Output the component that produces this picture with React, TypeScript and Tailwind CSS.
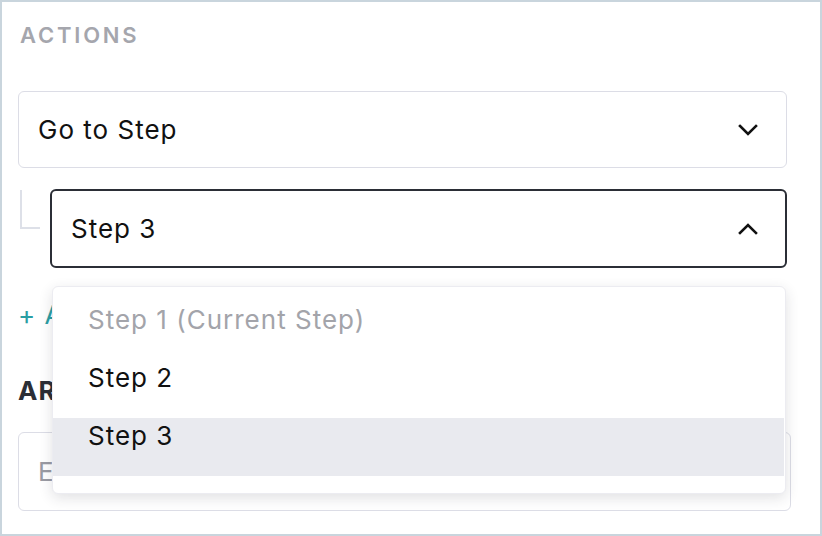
import React from 'react'

const Chevron = ({ up }: { up?: boolean }) => (
  <svg width="20" height="12" viewBox="0 0 20 12" fill="none" className="shrink-0">
    <polyline
      points={up ? '2,10 10,2 18,10' : '2,2 10,10 18,2'}
      stroke="#111"
      strokeWidth="2.6"
      strokeLinecap="square"
      strokeLinejoin="miter"
    />
  </svg>
)

const options = [
  { label: 'Step 1 (Current Step)', disabled: true },
  { label: 'Step 2' },
  { label: 'Step 3', active: true },
]

const App: React.FC = () => {
  return (
    <div
      className="w-[822px] h-[536px] border-[2px] border-[#c9d5dd] bg-white overflow-hidden"
      style={{ fontFamily: 'Inter, "Noto Sans", sans-serif' }}
    >
      <div className="relative pl-[16px] pr-[33px] pt-[19px] tracking-[1px]">
        <h3 className="text-[22px] leading-[28px] font-semibold tracking-[2.8px] text-[#a5a6ad] pl-[2px]">
          ACTIONS
        </h3>

        {/* action type */}
        <div className="mt-[42px] h-[77px] rounded-[6px] border border-[#dcdde6] flex items-center justify-between pl-[19px] pr-[28px]">
          <span className="text-[26px] text-[#111]">Go to Step</span>
          <Chevron />
        </div>

        {/* step select */}
        <div className="flex mt-[21px]">
          <div className="w-[32px] shrink-0 pl-[2px]">
            <div className="w-[20px] h-[39px] mt-[1px] border-l-[2px] border-b-[2px] border-[#dde0e8]" />
          </div>
          <div className="flex-1 h-[79px] rounded-[6px] border-[2px] border-[#2b2e36] flex items-center justify-between pl-[19px] pr-[27px]">
            <span className="text-[26px] text-[#111]">Step 3</span>
            <Chevron up />
          </div>
        </div>

        <div className="mt-[32px] text-[26px] leading-[30px] text-[#2a9ea3]">+ Add Action</div>

        <h3 className="mt-[46px] text-[26px] leading-[30px] font-bold text-[#2b2e36]">ARGUMENTS</h3>

        <div className="mt-[26px] mr-[-4px] h-[79px] rounded-[6px] border border-[#dcdde6] flex items-center pl-[19px]">
          <span className="text-[26px] text-[#9a9ba3]">Enter a value</span>
        </div>

        {/* open dropdown */}
        <div className="absolute left-[50px] top-[284px] w-[734px] rounded-[6px] bg-white border border-[#ececf1] shadow-[0_4px_14px_rgba(40,44,60,0.14)] pt-[15px] pb-[17px]">
          {options.map(o => (
            <div
              key={o.label}
              className={`h-[58px] pl-[35px] mr-[1px] ${o.active ? 'bg-[#e9eaef]' : ''}`}
            >
              <span
                className={`block text-[26px] leading-[36px] ${o.disabled ? 'text-[#a3a4aa]' : 'text-[#111]'}`}
              >
                {o.label}
              </span>
            </div>
          ))}
        </div>
      </div>
    </div>
  )
}

export default App
